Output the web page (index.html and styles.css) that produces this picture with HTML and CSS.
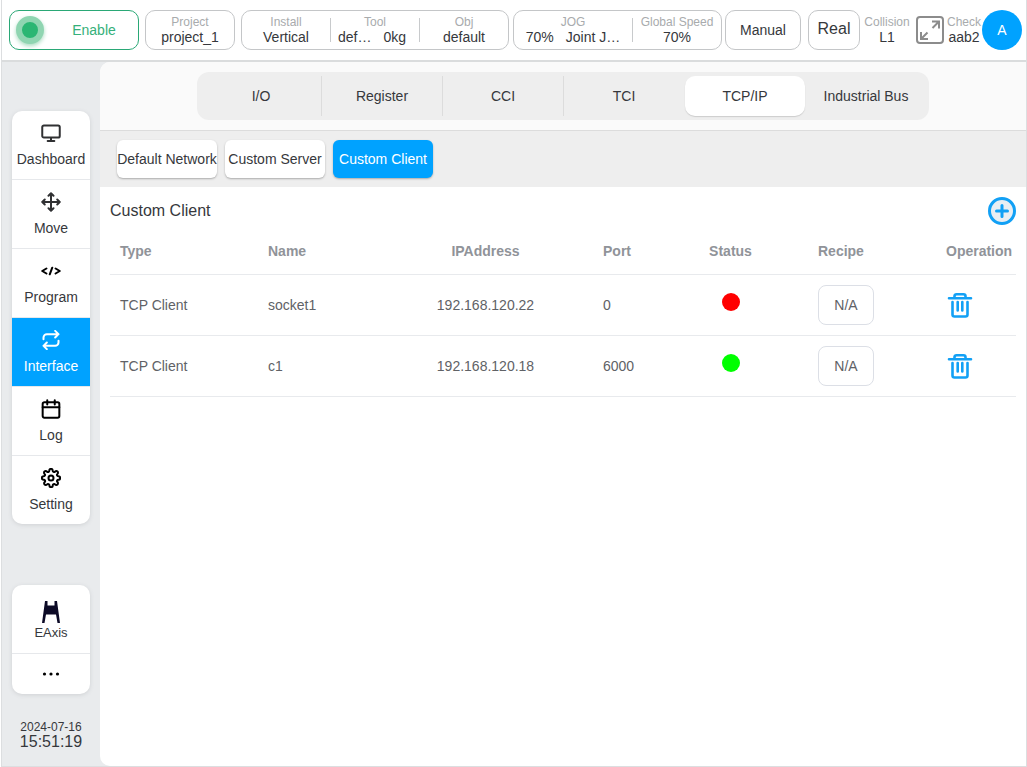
FILE: index.html
```html
<!DOCTYPE html>
<html lang="en">
<head>
<meta charset="utf-8">
<title>Custom Client</title>
<link rel="stylesheet" href="styles.css">
</head>
<body>
<div class="app">
  <header class="topbar">
    <button class="box enable" type="button"><span class="lamp"></span><span class="enable-text">Enable</span></button>
    <div class="box project">
      <div class="cell"><span class="label">Project</span><span class="value">project_1</span></div>
    </div>
    <div class="box install">
      <div class="cell"><span class="label">Install</span><span class="value">Vertical</span></div>
      <div class="cell"><span class="label">Tool</span><span class="value pair tool"><span>def…</span><span>0kg</span></span></div>
      <div class="cell"><span class="label">Obj</span><span class="value">default</span></div>
    </div>
    <div class="box jog">
      <div class="cell wide"><span class="label">JOG</span><span class="value pair"><span>70%</span><span>Joint J…</span></span></div>
      <div class="cell"><span class="label">Global Speed</span><span class="value">70%</span></div>
    </div>
    <button class="box mode" type="button">Manual</button>
    <button class="box real" type="button">Real</button>
    <div class="cell plain collision"><span class="label">Collision</span><span class="value">L1</span></div>
    <button class="icon-button fullscreen" type="button" aria-label="Full screen">
      <svg width="28" height="28" viewBox="0 0 28 28" fill="none" stroke="#8c8c8c" stroke-width="2">
        <rect x="1" y="1" width="26" height="26" rx="3"/>
        <path d="M16 5.500h7V12.500M23 5.500 16.500 12M5 16v7H12M5 23l6.500-6.500"/>
      </svg>
    </button>
    <div class="cell plain check"><span class="label">Check</span><span class="value">aab2</span></div>
    <button class="avatar" type="button">A</button>
  </header>

  <div class="body">
    <aside class="sidebar">
      <nav class="card menu">
        <a class="item" href="#dashboard">
          <svg viewBox="0 0 24 24"><rect x="1.500" y="3" width="21" height="14.500" rx="2"/><path d="M8 21.500h8M12 18v3"/></svg>
          <span>Dashboard</span>
        </a>
        <a class="item" href="#move">
          <svg viewBox="0 0 24 24"><path d="M4.500 9l-3 3 3 3M9 4.500l3-3 3 3M15 19.500l-3 3-3-3M19.500 9l3 3-3 3M2 12h20M12 2v20"/></svg>
          <span>Move</span>
        </a>
        <a class="item black" href="#program">
          <svg viewBox="0 0 24 24"><path d="M6.500 9 1.500 12l5 3M17.500 9l5 3-5 3M13.500 8l-3 8"/></svg>
          <span>Program</span>
        </a>
        <a class="item active" href="#interface" aria-current="page">
          <svg viewBox="0 0 24 24"><path d="M17 1l4 4-4 4M3 11V9a4 4 0 0 1 4-4h14M7 23l-4-4 4-4M21 13v2a4 4 0 0 1-4 4H3"/></svg>
          <span>Interface</span>
        </a>
        <a class="item black" href="#log">
          <svg viewBox="0 0 24 24"><rect x="2" y="4" width="20" height="18.500" rx="2"/><path d="M16.500 1.500v5M7.500 1.500v5M2 10h20"/></svg>
          <span>Log</span>
        </a>
        <a class="item black" href="#setting">
          <svg viewBox="0 0 24 24"><circle cx="12" cy="12" r="3"/><path d="M19.400 15a1.650 1.650 0 0 0 .33 1.820l.06.06a2 2 0 1 1-2.830 2.830l-.06-.06a1.650 1.650 0 0 0-2.800 1.170V21a2 2 0 0 1-4 0v-.09a1.650 1.650 0 0 0-2.900-1.180l-.06.06a2 2 0 1 1-2.830-2.830l.06-.06A1.650 1.650 0 0 0 3.200 14H3a2 2 0 0 1 0-4h.09a1.650 1.650 0 0 0 1.180-2.900l-.06-.06a2 2 0 1 1 2.830-2.830l.06.06A1.650 1.650 0 0 0 10 3.170V3a2 2 0 0 1 4 0v.09a1.650 1.650 0 0 0 2.900 1.180l.06-.06a2 2 0 1 1 2.830 2.830l-.06.06a1.650 1.650 0 0 0 1.170 2.900H21a2 2 0 0 1 0 4h-.09a1.650 1.650 0 0 0-1.510 1z"/></svg>
          <span>Setting</span>
        </a>
      </nav>
      <div class="card tools">
        <a class="item eaxis" href="#eaxis">
          <svg viewBox="0 0 20 22"><path fill="#0c0a26" stroke="none" d="M4 0h2.500v4.500h7V0H16l3 22h-2.500l-1.500-8.500H5L3.500 22H1z"/></svg>
          <span>EAxis</span>
        </a>
        <button class="more" type="button" aria-label="More">
          <svg width="18" height="4" viewBox="0 0 18 4"><circle cx="2.500" cy="2" r="1.600"/><circle cx="9" cy="2" r="1.600"/><circle cx="15.500" cy="2" r="1.600"/></svg>
        </button>
      </div>
      <div class="clock"><span class="date">2024-07-16</span><span class="time">15:51:19</span></div>
    </aside>

    <main class="main">
      <div class="tabbar">
        <div class="tabs">
          <button class="tab" type="button">I/O</button>
          <button class="tab" type="button">Register</button>
          <button class="tab" type="button">CCI</button>
          <button class="tab last" type="button">TCI</button>
          <button class="tab selected" type="button">TCP/IP</button>
          <button class="tab last" type="button">Industrial Bus</button>
        </div>
      </div>
      <div class="subtabs">
        <button class="subtab" type="button">Default Network</button>
        <button class="subtab" type="button">Custom Server</button>
        <button class="subtab selected" type="button">Custom Client</button>
      </div>
      <section class="content">
        <div class="heading">
          <h1>Custom Client</h1>
          <button class="icon-button" type="button" aria-label="Add client">
            <svg width="28" height="28" viewBox="0 0 28 28" fill="#e9eef3" stroke="#12a0f5" stroke-width="3" stroke-linecap="round">
              <circle cx="14" cy="14" r="12.500"/><path d="M14 8.500v11M8.500 14h11"/>
            </svg>
          </button>
        </div>
        <table class="clients">
          <colgroup><col class="c-type"><col class="c-name"><col class="c-ip"><col class="c-port"><col class="c-status"><col class="c-recipe"><col class="c-op"></colgroup>
          <thead>
            <tr><th>Type</th><th>Name</th><th class="mid">IPAddress</th><th>Port</th><th class="mid">Status</th><th>Recipe</th><th>Operation</th></tr>
          </thead>
          <tbody>
            <tr>
              <td>TCP Client</td><td>socket1</td><td class="mid">192.168.120.22</td><td>0</td>
              <td class="mid state"><span class="dot off"></span></td>
              <td><button class="recipe" type="button">N/A</button></td>
              <td><button class="icon-button" type="button" aria-label="Delete socket1">
                <svg class="trash" viewBox="0 0 28 28"><path d="M3 7.200h22M8.500 7V5q0-1.700 2-1.700h7q2 0 2 1.700v2M6.500 11v12.500q0 2 2 2h11q2 0 2-2V11M11.700 11v8.500M16.300 11v8.500"/></svg>
              </button></td>
            </tr>
            <tr>
              <td>TCP Client</td><td>c1</td><td class="mid">192.168.120.18</td><td>6000</td>
              <td class="mid state"><span class="dot on"></span></td>
              <td><button class="recipe" type="button">N/A</button></td>
              <td><button class="icon-button" type="button" aria-label="Delete c1">
                <svg class="trash" viewBox="0 0 28 28"><path d="M3 7.200h22M8.500 7V5q0-1.700 2-1.700h7q2 0 2 1.700v2M6.500 11v12.500q0 2 2 2h11q2 0 2-2V11M11.700 11v8.500M16.300 11v8.500"/></svg>
              </button></td>
            </tr>
          </tbody>
        </table>
      </section>
    </main>
  </div>
</div>
</body>
</html>
```

FILE: styles.css
```css
* { box-sizing: border-box; }

body {
  margin: 0;
  font-family: "Liberation Sans", Arial, sans-serif;
  font-size: 14px;
  color: #36383c;
  background: #fff;
}

button {
  margin: 0;
  padding: 0;
  border: 0;
  background: none;
  font: inherit;
  color: inherit;
  cursor: pointer;
}

a { color: inherit; text-decoration: none; }

svg { display: block; }

.app {
  display: flex;
  flex-direction: column;
  min-height: 100vh;
  margin-left: 1px;
  border: solid #dcdee0;
  border-width: 0 1px 1px;
}

/* Top bar */
.topbar {
  display: flex;
  align-items: center;
  height: 62px;
  padding: 0 4px 0 7px;
  border-bottom: 2px solid #dadcdd;
  background: #fff;
  white-space: nowrap;
}

.box {
  display: flex;
  align-items: center;
  justify-content: center;
  height: 40px;
  border: 1px solid #c4c6c8;
  border-radius: 10px;
  background: #fff;
}

.enable {
  flex: 1 0 130px;
  justify-content: flex-start;
  padding-left: 6px;
  border-color: #2aa876;
  color: #35b07a;
}

.enable-text { flex: 1; padding-left: 6px; }

.lamp {
  width: 28px;
  height: 28px;
  border: 6px solid #8fd5b1;
  border-radius: 50%;
  background: #2bb673;
  box-shadow: 0 2px 4px #a8dcc0;
}

.project { flex: 1 0 90px; margin-left: 6px; }
.install { flex: 3 0 268px; margin-left: 6px; }
.jog { flex: 2 0 209px; margin-left: 4px; }
.mode { flex: 1 0 76px; margin-left: 3px; }
.real { flex: 0 0 52px; margin-left: 7px; padding-bottom: 3px; font-size: 16px; }

.cell {
  display: flex;
  flex: 1;
  flex-direction: column;
  align-items: center;
}

.box .cell + .cell { border-left: 1px solid #c8cacc; height: 24px; justify-content: center; }
.box .wide { flex: 0 0 57%; }

.label { color: #a8abad; font-size: 12px; line-height: 14px; }
.value { line-height: 16px; }
.pair { display: flex; gap: 12px; }
.tool { padding-right: 6px; }

.plain { flex: none; }
.collision { width: 46px; margin-left: 4px; }
.fullscreen { margin-left: 6px; }
.check { width: 34px; margin-left: 3px; margin-right: 1px; }

.icon-button { display: block; flex: none; }

.avatar {
  flex: none;
  width: 40px;
  height: 40px;
  border-radius: 50%;
  background: #00a2ff;
  color: #fff;
}

/* Body */
.body {
  display: flex;
  flex: 1;
  background: #e9ebed;
}

.sidebar {
  display: flex;
  flex: none;
  flex-direction: column;
  width: 98px;
  padding: 49px 10px 16px;
}

.card {
  overflow: hidden;
  border-radius: 10px;
  background: #fff;
  box-shadow: 0 1px 4px #cfd1d4;
}

.item {
  display: flex;
  flex-direction: column;
  align-items: center;
  gap: 8px;
  height: 69px;
  padding-top: 12px;
  border-bottom: 1px solid #e6e8eb;
  line-height: 16px;
}

.menu .item:last-child { height: 68px; border-bottom: 0; }

.item svg {
  width: 20px;
  height: 20px;
  fill: none;
  stroke: #303133;
  stroke-width: 2.4;
  stroke-linecap: round;
  stroke-linejoin: round;
}

.black svg { stroke: #000; }

.active { background: #00a2ff; color: #fff; }
.active svg { stroke: #fff; }

.tools { margin-top: 61px; }
.eaxis { gap: 2px; padding-top: 16px; font-size: 13px; line-height: 16px; }
.eaxis svg { width: 20px; height: 22px; }

.more {
  display: flex;
  align-items: center;
  justify-content: center;
  width: 100%;
  height: 40px;
}

.clock {
  display: flex;
  flex-direction: column;
  align-items: center;
  margin-top: auto;
}

.date { font-size: 12px; line-height: 14px; }
.time { font-size: 16px; line-height: 16px; }

.main {
  flex: 1;
  min-width: 0;
  overflow: hidden;
  border-radius: 10px 0 0 10px;
  background: #fff;
}

.tabbar {
  display: flex;
  justify-content: center;
  padding: 10px;
  border-bottom: 1px solid #dcdcdc;
  background: #fafafa;
}

.tabs {
  display: flex;
  padding: 4px 2px 4px 4px;
  border-radius: 12px;
  background: #eee;
}

.tab {
  width: 121px;
  height: 40px;
  border-right: 1px solid #dcdcdc;
}

.tab.last { border-right-color: transparent; }

.tab.selected {
  width: 120px;
  margin-right: 1px;
  border-right: 0;
  border-radius: 10px;
  background: #fff;
  box-shadow: 0 1px 1px #ccc;
}

.subtabs {
  display: flex;
  gap: 8px;
  padding: 9px 17px;
  background: #eee;
}

.subtab {
  width: 100px;
  height: 38px;
  border-radius: 6px;
  background: #fff;
  box-shadow: 0 1px 2px #aaa;
  white-space: nowrap;
}

.subtab.selected { background: #00a2ff; color: #fff; }

.content { padding: 0 10px; }

.heading {
  display: flex;
  align-items: center;
  justify-content: space-between;
  height: 48px;
}

h1 { margin: 0; font-size: 16px; font-weight: 400; }

.clients {
  width: 100%;
  margin-top: -7px;
  border-collapse: separate;
  border-spacing: 0;
  table-layout: fixed;
  color: #606266;
}

.c-type { width: 148px; }
.c-name { width: 120px; }
.c-ip { width: 215px; }
.c-port { width: 60px; }
.c-status { width: 155px; }
.c-recipe { width: 128px; }
.c-op { width: 80px; }

.clients th,
.clients td {
  height: 61px;
  padding: 0 0 0 10px;
  border-bottom: 1px solid #e8eaed;
  text-align: left;
  white-space: nowrap;
}

.clients th { height: 47px; color: #909399; }
.clients .mid { padding: 0; text-align: center; }
.clients .state { padding-bottom: 6px; }

.dot {
  display: block;
  width: 18px;
  height: 18px;
  margin: 0 auto;
  border-radius: 50%;
}

.off { background: #f00; }
.on { background: #0f0; }

.recipe {
  display: block;
  width: 56px;
  height: 40px;
  border: 1px solid #dcdfe6;
  border-radius: 8px;
}

.trash {
  width: 28px;
  height: 28px;
  fill: none;
  stroke: #12a0f5;
  stroke-width: 2.6;
  stroke-linecap: round;
  stroke-linejoin: round;
}
```
